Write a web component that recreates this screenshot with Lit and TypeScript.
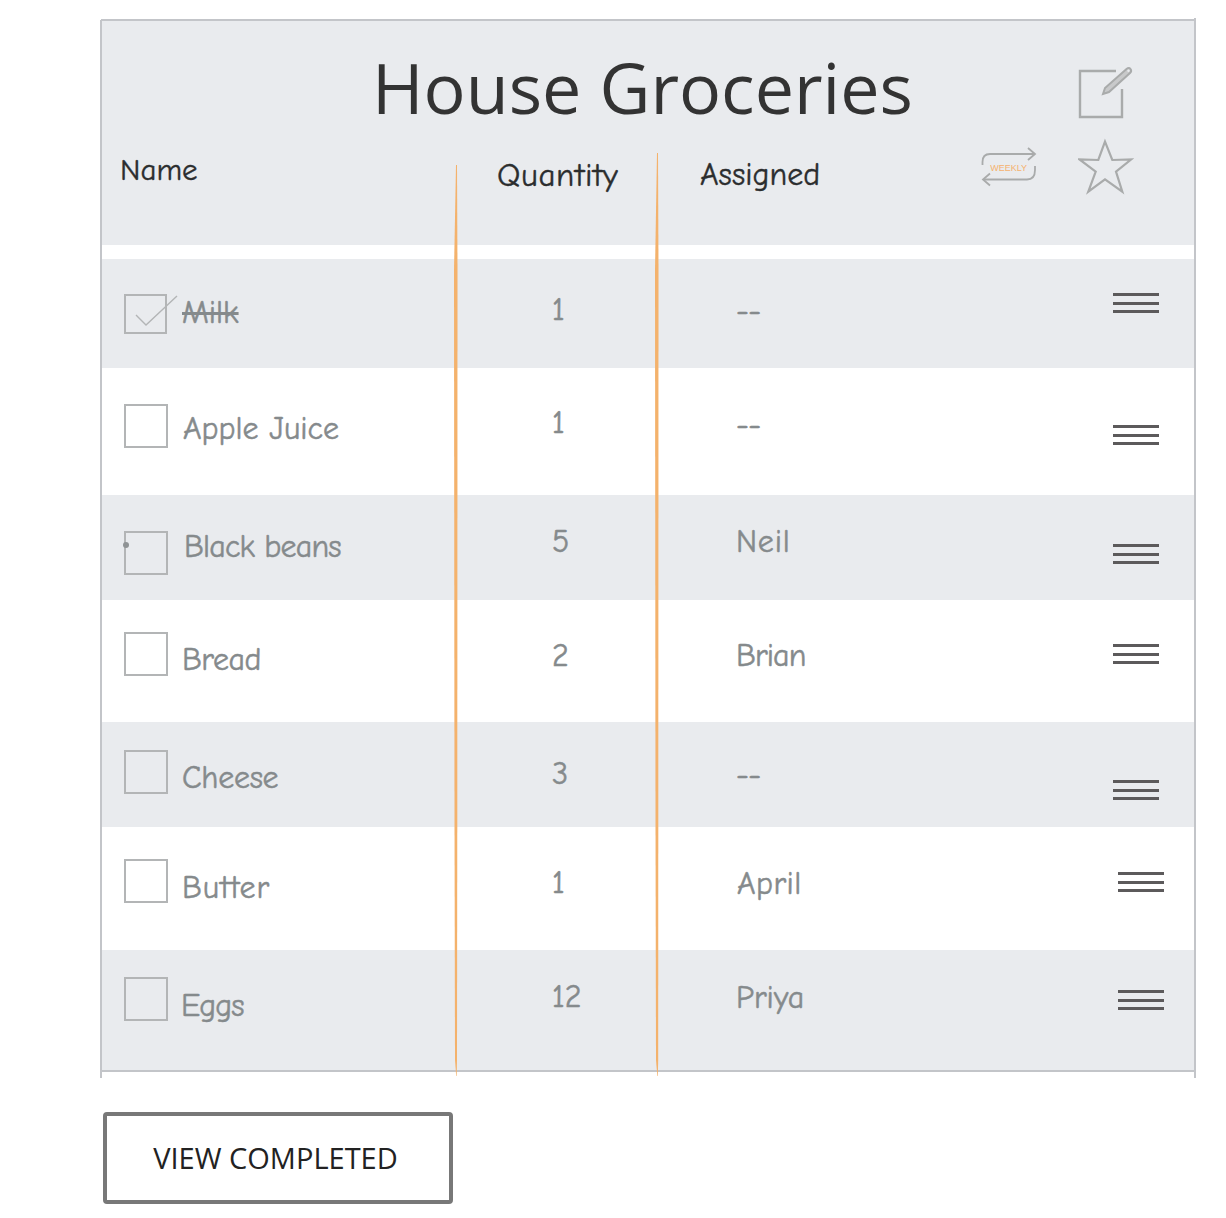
import { LitElement, html, css } from 'lit';
import { customElement } from 'lit/decorators.js';

interface Item {
  name: string;
  qty: string;
  who: string;
  h: number;      // row height
  boxY: number;   // offsets below are measured from the row top
  nameX: number;
  nameY: number;
  nameLs?: number;
  qtyX: number;
  qtyY: number;
  whoX: number;
  whoY: number;
  whoLs?: number;
  menuX: number;
  menuY: number;
  done?: boolean;
  dot?: boolean;
}

const ITEMS: Item[] = [
  { name: 'Milk', qty: '1', who: '--', h: 109, boxY: 35, nameX: 15, nameY: 34, qtyX: 96, qtyY: 31, whoX: 79, whoY: 32, whoLs: -0.5, menuX: 1012, menuY: 34, done: true },
  { name: 'Apple Juice', qty: '1', who: '--', h: 127, boxY: 36, nameX: 15, nameY: 41, qtyX: 96, qtyY: 35, whoX: 79, whoY: 37, whoLs: -0.5, menuX: 1012, menuY: 57 },
  { name: 'Black beans', qty: '5', who: 'Neil', h: 105, boxY: 36, nameX: 16, nameY: 32, nameLs: -0.8, qtyX: 96, qtyY: 27, whoX: 79, whoY: 27, whoLs: 0.8, menuX: 1012, menuY: 49, dot: true },
  { name: 'Bread', qty: '2', who: 'Brian', h: 122, boxY: 32, nameX: 14, nameY: 40, nameLs: -0.5, qtyX: 96, qtyY: 36, whoX: 79, whoY: 36, whoLs: -0.9, menuX: 1012, menuY: 44 },
  { name: 'Cheese', qty: '3', who: '--', h: 105, boxY: 28, nameX: 14, nameY: 36, nameLs: -0.3, qtyX: 96, qtyY: 32, whoX: 79, whoY: 33, whoLs: -0.5, menuX: 1012, menuY: 58 },
  { name: 'Butter', qty: '1', who: 'April', h: 123, boxY: 32, nameX: 14, nameY: 41, nameLs: 1, qtyX: 96, qtyY: 36, whoX: 80, whoY: 37, whoLs: 0.4, menuX: 1017, menuY: 45 },
  { name: 'Eggs', qty: '12', who: 'Priya', h: 120, boxY: 27, nameX: 13, nameY: 36, nameLs: -1, qtyX: 96, qtyY: 27, whoX: 79, whoY: 28, menuX: 1017, menuY: 40 },
];

@customElement('app-root')
export default class AppRoot extends LitElement {
  static override styles = css`
    :host {
      display: block;
      width: 1226px;
      height: 1218px;
      background: #fff;
      font-family: "Comic Sans MS", "Comic Neue", cursive;
    }
    .page {
      padding: 20px 0 0 101px;
    }
    .sheet {
      position: relative;
      width: 1093px;
      height: 1051px;
    }
    .edge {
      position: absolute;
      left: -2px;
      top: -3px;
      pointer-events: none;
    }
    .head {
      height: 225px;
      background: #e9ebee;
    }
    .title-row {
      display: flex;
      height: 126px;
    }
    .title {
      margin: 27px 0 0 271px;
      font: 400 70px/80px "Open Sans", sans-serif;
      color: #333;
    }
    .edit {
      margin: 46px 60px 0 auto;
    }
    .cols {
      display: grid;
      grid-template-columns: 355px 201px 324px 97px 1fr;
      align-items: start;
      height: 99px;
      color: #2b2d2e;
      font-size: 31px;
      line-height: 40px;
      -webkit-text-stroke: 0.4px currentColor;
    }
    .cols .name { padding-left: 19px; margin-top: 4px; }
    .cols .qty { padding-left: 41px; margin-top: 9px; font-size: 33px; letter-spacing: 0.6px; }
    .cols .who { padding-left: 43px; margin-top: 9px; font-size: 32px; }
    .cols svg { -webkit-text-stroke: 0; }
    .star { margin-top: -11px; }
    .row {
      position: relative;
      display: grid;
      grid-template-columns: 355px 201px 1fr;
      align-items: start;
      font-size: 32px;
      line-height: 40px;
      color: #858a8c;
      -webkit-text-stroke: 0.5px currentColor;
    }
    .row:nth-child(odd) { background: #e9ebee; }
    .gap { height: 14px; }
    .name-cell {
      display: flex;
      align-items: flex-start;
      padding-left: 23px;
    }
    .box {
      position: relative;
      flex: none;
      width: 44px;
      height: 44px;
      box-sizing: border-box;
      border: 2px solid #b3b5b6;
    }
    .box.checked {
      width: 43px;
      height: 40px;
    }
    .tick {
      position: absolute;
      left: 6px;
      top: -2px;
      overflow: visible;
    }
    .dot {
      position: absolute;
      left: -3px;
      top: 9px;
      width: 6px;
      height: 6px;
      border-radius: 50%;
      background: #8f9395;
    }
    .done {
      text-decoration: line-through;
      text-decoration-thickness: 3px;
    }
    .menu {
      position: absolute;
      display: flex;
      flex-direction: column;
      gap: 5.5px;
      width: 46px;
    }
    .menu i {
      display: block;
      height: 3px;
      background: #5c5a5b;
    }
    .guides {
      position: absolute;
      left: 0;
      top: 0;
      pointer-events: none;
    }
    .btn {
      display: flex;
      align-items: center;
      justify-content: center;
      box-sizing: border-box;
      width: 350px;
      height: 92px;
      margin: 41px 0 0 2px;
      padding: 0 5px 0 0;
      border: 4px solid #787878;
      border-radius: 4px;
      background: #fff;
      font: 400 29px/40px "Open Sans", sans-serif;
      color: #222;
    }
  `;

  private renderRow(it: Item) {
    const top = (v: number) => `margin-top:${v}px`;
    return html`
      <div class="row" style="height:${it.h}px">
        <div class="name-cell">
          <div class="box ${it.done ? 'checked' : ''}" style="${top(it.boxY)}">
            ${it.done
              ? html`<svg class="tick" width="50" height="40" fill="none" stroke="#b3b5b6" stroke-width="1.4">
                  <path d="M4 21 L14 31 L45 2" />
                </svg>`
              : ''}
            ${it.dot ? html`<span class="dot"></span>` : ''}
          </div>
          <span class="${it.done ? 'done' : ''}" style="margin-left:${it.nameX}px;letter-spacing:${it.nameLs ?? 0}px;${top(it.nameY)}">${it.name}</span>
        </div>
        <div style="padding-left:${it.qtyX}px;${top(it.qtyY)}">${it.qty}</div>
        <div style="padding-left:${it.whoX}px;letter-spacing:${it.whoLs ?? 0}px;${top(it.whoY)}">${it.who}</div>
        <div class="menu" style="left:${it.menuX}px;top:${it.menuY}px"><i></i><i></i><i></i></div>
      </div>
    `;
  }

  override render() {
    return html`
      <div class="page">
        <div class="sheet">
          <div class="head">
            <div class="title-row">
              <div class="title">House Groceries</div>
              <svg class="edit" width="56" height="54" viewBox="0 0 56 54" fill="none" stroke="#a9abab" stroke-width="2.4">
                <path d="M38 5 H2 V51 H44 V23" />
                <path d="M25 28 L27 22 L48.5 3 Q51 1 52.5 3 Q54 5 52 7 L31 26 Z" stroke-width="2" fill="#c8c9ca" />
                <circle cx="50.5" cy="4.8" r="1.2" fill="#e9ebee" stroke="none" />
              </svg>
            </div>
            <div class="cols">
              <div class="name">Name</div>
              <div class="qty">Quantity</div>
              <div class="who">Assigned</div>
              <svg width="56" height="42" viewBox="0 0 56 42" fill="none" stroke="#a9abab" stroke-width="1.8">
                <path d="M1.5 19 V16 Q1.5 8 9 8 H53" />
                <path d="M47 2 L54 8 L47 14" />
                <path d="M54 20 V24 Q54 33.5 46 33.5 H3" />
                <path d="M9 27.5 L2 33.5 L9 39.5" />
                <text x="27.7" y="25" text-anchor="middle" fill="#f5b26f" stroke="none" font-family="Liberation Sans" font-size="9">WEEKLY</text>
              </svg>
              <svg class="star" width="56" height="60" viewBox="0 0 56 60" fill="none" stroke="#a9abab" stroke-width="2.2">
                <path d="M27 6.7 L34.3 25 L53 24.5 L38 36.7 L44.3 56.7 L27 44.3 L10.3 56.7 L17.7 36.7 L1.5 24.5 L20.3 25 Z" />
              </svg>
            </div>
          </div>
          <div class="gap"></div>
          <div>${ITEMS.map((it) => this.renderRow(it))}</div>
          <svg class="edge" width="1100" height="1065" fill="none" stroke="#c3c5c9" stroke-width="2">
            <path d="M2 3 V1061" />
            <path d="M1096 1 V1061" />
            <path d="M2 3 H1096" />
            <path d="M2 1054 H1096" />
          </svg>
          <svg class="guides" width="1093" height="1060" fill="#f4b26c">
            <polygon points="355,145 356,145 356.5,250 356.3,800 356,1040 355.7,1056 355.2,1056 354,1040 353.5,800 353,250" />
            <polygon points="556,133 557,133 557.5,250 557.3,800 557.2,1040 556.8,1056 556.3,1056 555,1040 554.5,800 554,250" />
          </svg>
        </div>
        <button class="btn">VIEW COMPLETED</button>
      </div>
    `;
  }
}
